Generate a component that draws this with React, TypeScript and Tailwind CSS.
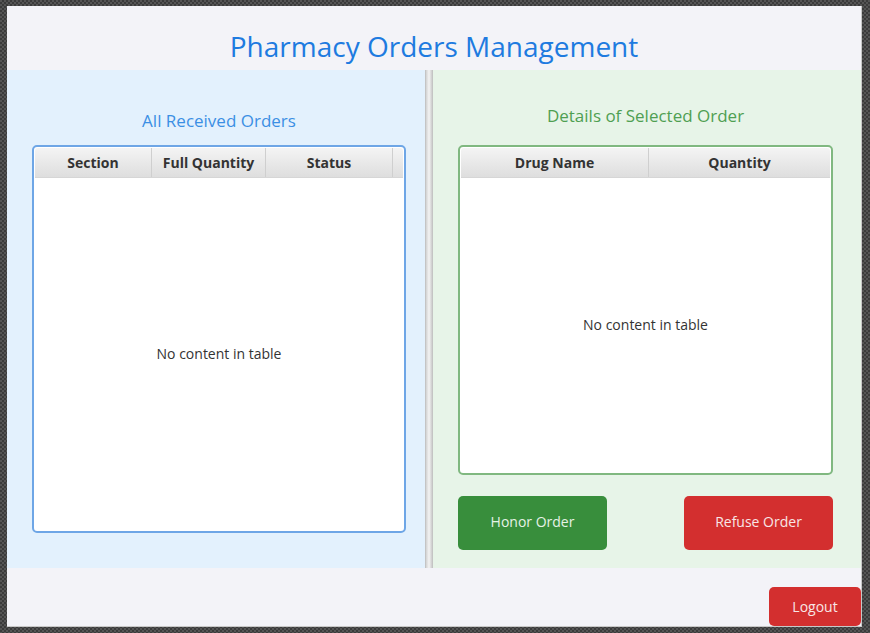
import React from "react";

const font = { fontFamily: '"Open Sans", "Noto Sans", sans-serif' };

interface Column {
  label: string;
  width: string;
}

function EmptyTable({
  columns,
  tone,
  height,
}: {
  columns: Column[];
  tone: "blue" | "green";
  height: string;
}) {
  const border = tone === "blue" ? "border-[#6ea6e6]" : "border-[#80b880]";
  return (
    <div
      className={`flex flex-col rounded-[5px] border-2 ${border} bg-white p-[1px] ${height}`}
    >
      <div className="flex h-[30px] shrink-0 bg-gradient-to-b from-[#f4f4f4] to-[#dedede] border-b border-[#d6d6d6] rounded-t-[3px]">
        {columns.map((col) => (
          <div
            key={col.label}
            className={`flex items-center justify-center border-r border-[#cfcfcf] text-[14px] font-bold text-[#333] ${col.width}`}
          >
            {col.label}
          </div>
        ))}
      </div>
      <div className="flex flex-1 items-center justify-center pb-[2px] text-[14px] text-[#333]">
        No content in table
      </div>
    </div>
  );
}

export default function App() {
  return (
    <div
      className="h-[633px] w-[870px] bg-[repeating-conic-gradient(#3b3b3b_0_25%,#555555_0_50%)] bg-[length:4px_4px] pt-[6px] pl-[7px]"
      style={font}
    >
      <div className="flex h-[621px] w-[855px] flex-col bg-[#f3f3f8] border-r border-b border-[#c8c8c8]">
        {/* Title bar */}
        <div className="flex h-[64px] shrink-0 items-end justify-center pb-[6px]">
          <h1 className="text-[28px] leading-none text-[#1e7be0] pb-[4px]">
            Pharmacy Orders Management
          </h1>
        </div>

        {/* Split panes */}
        <div className="flex h-[498px] shrink-0">
          <div className="flex w-[418px] flex-col bg-[#e3f1fd] pl-[25px] pr-[19px]">
            <div className="flex h-[75px] items-end justify-center pb-[12px] text-[17px] text-[#3b8fe4]">
              All Received Orders
            </div>
            <EmptyTable
              tone="blue"
              height="h-[388px]"
              columns={[
                { label: "Section", width: "w-[117px]" },
                { label: "Full Quantity", width: "w-[114px]" },
                { label: "Status", width: "w-[127px]" },
                { label: "", width: "flex-1 border-r-0" },
              ]}
            />
          </div>

          <div className="w-[8px] bg-gradient-to-r from-[#d2d2d2] via-[#f4f4f4] to-[#cccccc] border-x border-[#c4c4c4]" />

          <div className="flex flex-1 flex-col bg-[#e7f4e8] pl-[25px] pr-[28px]">
            <div className="flex h-[75px] items-end justify-center pb-[17px] text-[17px] text-[#4f9f52]">
              Details of Selected Order
            </div>
            <EmptyTable
              tone="green"
              height="h-[330px]"
              columns={[
                { label: "Drug Name", width: "w-[188px]" },
                { label: "Quantity", width: "flex-1 border-r-0" },
              ]}
            />
            <div className="mt-[21px] flex justify-between">
              <button className="h-[54px] w-[149px] rounded-[5px] bg-[#388e3c] pb-[4px] text-[14px] text-[#e6f2e6]">
                Honor Order
              </button>
              <button className="h-[54px] w-[149px] rounded-[5px] bg-[#d32f2f] pb-[4px] text-[14px] text-[#f8e6e6]">
                Refuse Order
              </button>
            </div>
          </div>
        </div>

        {/* Footer */}
        <div className="flex flex-1 items-end justify-end">
          <button className="h-[39px] w-[92px] rounded-[5px] bg-[#d32f2f] text-[14px] text-[#f8e6e6]">
            Logout
          </button>
        </div>
      </div>
    </div>
  );
}
